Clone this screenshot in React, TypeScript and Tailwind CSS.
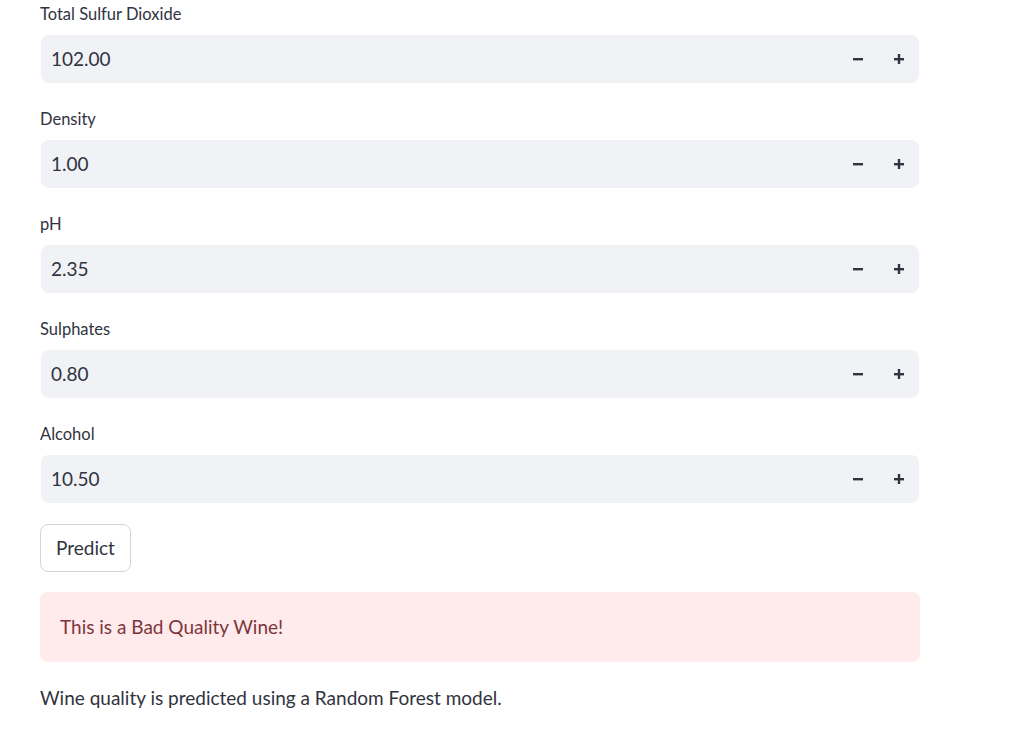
import React from "react";

const fields = [
  { label: "Total Sulfur Dioxide", value: "102.00" },
  { label: "Density", value: "1.00" },
  { label: "pH", value: "2.35" },
  { label: "Sulphates", value: "0.80" },
  { label: "Alcohol", value: "10.50" },
];

const font = { fontFamily: '"Source Sans Pro", Lato, "Noto Sans", sans-serif' };

function Minus() {
  return (
    <svg width="12" height="12" viewBox="0 0 12 12">
      <rect x="1" y="5" width="10" height="2.4" fill="#31333f" />
    </svg>
  );
}
function Plus() {
  return (
    <svg width="12" height="12" viewBox="0 0 12 12">
      <rect x="1" y="5" width="10" height="2.4" fill="#31333f" />
      <rect x="4.8" y="1" width="2.4" height="10" fill="#31333f" />
    </svg>
  );
}

export default function App() {
  return (
    <div className="min-h-[732px] w-[1030px] bg-white text-[#31333f]" style={font}>
      <div className="ml-[40px] w-[880px] flex flex-col">
        {fields.map((f) => (
          <div key={f.label} className="flex flex-col mb-[22px]">
            <div className="h-[35px] pt-[4px] text-[16.5px] leading-[21px]">{f.label}</div>
            <div className="h-[48px] ml-[1px] w-[878px] rounded-[8px] bg-[#f0f2f6] flex items-center">
              <div className="flex-1 pl-[10px] pt-[1px] text-[19px]">{f.value}</div>
              <div className="w-[41px] h-full flex items-center justify-center">
                <Minus />
              </div>
              <div className="w-[41px] h-full flex items-center justify-center">
                <Plus />
              </div>
            </div>
          </div>
        ))}
        <div className="-mt-[1px]">
          <button className="h-[48px] px-[15px] rounded-[8px] border border-[#d6d6d9] bg-white text-[19px] text-[#31333f]">
            Predict
          </button>
        </div>
        <div className="mt-[20px] h-[70px] rounded-[8px] bg-[#ffebeb] flex items-center px-[20px] text-[19px] text-[#7d353b]">
          This is a Bad Quality Wine!
        </div>
        <div className="mt-[24px] text-[19px] leading-[24px]">
          Wine quality is predicted using a Random Forest model.
        </div>
      </div>
    </div>
  );
}
